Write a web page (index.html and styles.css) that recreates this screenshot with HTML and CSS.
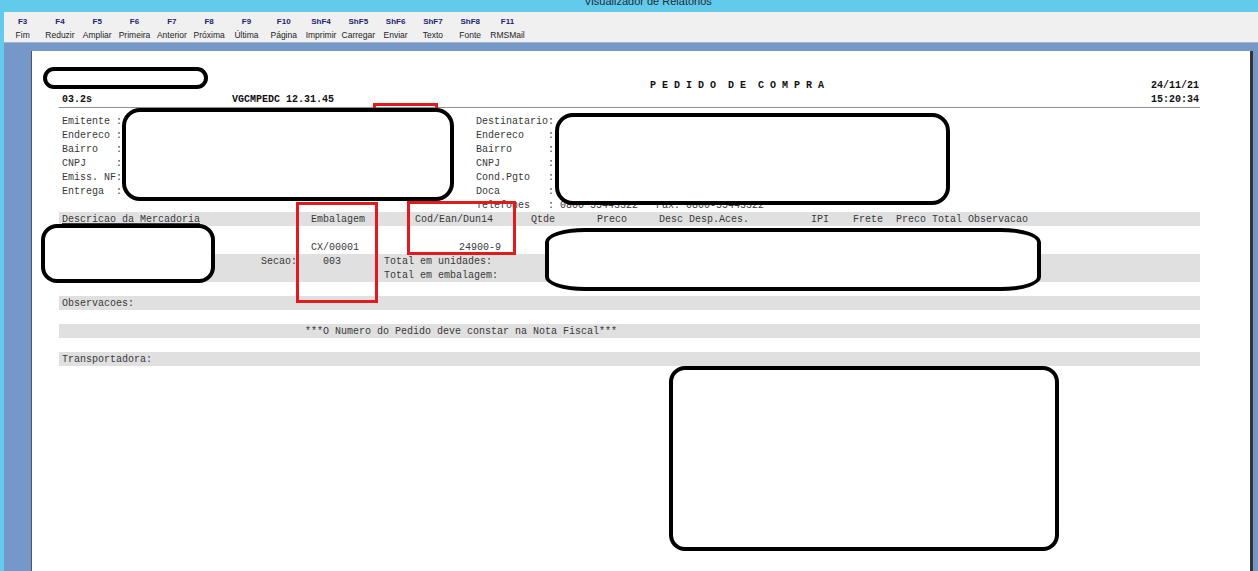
FILE: index.html
```
<!DOCTYPE html>
<html lang="pt-BR">
<head>
<meta charset="utf-8">
<title>Visualizador de Relatórios</title>
<link rel="stylesheet" href="styles.css">
</head>
<body>
<div class="app">
  <header class="titlebar"><div class="title">Visualizador de Relatórios</div></header>
  <div class="frame">
    <nav class="toolbar">
      <div class="tool"><span class="key">F3</span><span class="desc">Fim</span></div>
      <div class="tool"><span class="key">F4</span><span class="desc">Reduzir</span></div>
      <div class="tool"><span class="key">F5</span><span class="desc">Ampliar</span></div>
      <div class="tool"><span class="key">F6</span><span class="desc">Primeira</span></div>
      <div class="tool"><span class="key">F7</span><span class="desc">Anterior</span></div>
      <div class="tool"><span class="key">F8</span><span class="desc">Próxima</span></div>
      <div class="tool"><span class="key">F9</span><span class="desc">Última</span></div>
      <div class="tool"><span class="key">F10</span><span class="desc">Página</span></div>
      <div class="tool"><span class="key">ShF4</span><span class="desc">Imprimir</span></div>
      <div class="tool"><span class="key">ShF5</span><span class="desc">Carregar</span></div>
      <div class="tool"><span class="key">ShF6</span><span class="desc">Enviar</span></div>
      <div class="tool"><span class="key">ShF7</span><span class="desc">Texto</span></div>
      <div class="tool"><span class="key">ShF8</span><span class="desc">Fonte</span></div>
      <div class="tool"><span class="key">F11</span><span class="desc">RMSMail</span></div>
    </nav>
    <main class="viewer">
      <div class="page">
        <div class="report">
          <div class="rhead">
            <div class="hrow"><span class="doc-title">P E D I D O  D E  C O M P R A</span><span class="hright">24/11/21</span></div>
            <div class="hrow"><span class="prog">03.2s</span><span>VGCMPEDC 12.31.45</span><span class="hright">15:20:34</span></div>
          </div>
          <div class="parties">
            <div class="col-left">
              <div class="line">Emitente :</div>
              <div class="line">Endereco :</div>
              <div class="line">Bairro   :</div>
              <div class="line">CNPJ     :</div>
              <div class="line">Emiss. NF:</div>
              <div class="line">Entrega  :</div>
            </div>
            <div class="col-right">
              <div class="line">Destinatario:</div>
              <div class="line">Endereco    :</div>
              <div class="line">Bairro      :</div>
              <div class="line">CNPJ        :</div>
              <div class="line">Cond.Pgto   :</div>
              <div class="line">Doca        :</div>
              <div class="line">Telefones   : 0800 55443322   Fax: 0800-55443322</div>
            </div>
          </div>
          <div class="band thead">
            <span class="c-desc underline">Descricao da Mercadoria</span>
            <span class="c-emb">Embalagem</span>
            <span class="c-cod">Cod/Ean/Dun14</span>
            <span class="c-qtd">Qtde</span>
            <span class="c-preco">Preco</span>
            <span class="c-despesa">Desc Desp.Aces.</span>
            <span class="c-ipi">IPI</span>
            <span class="c-frete">Frete</span>
            <span>Preco Total Observacao</span>
          </div>
          <div class="blank"></div>
          <div class="item">
            <span class="c-desc"></span>
            <span class="c-emb">CX/00001</span>
            <span class="c-code-val">24900-9</span>
          </div>
          <div class="band totals">
            <div class="trow"><span class="t-space"></span><span class="t-secao">Secao:</span><span class="t-val">003</span><span>Total em unidades:</span></div>
            <div class="trow"><span class="t-space"></span><span class="t-secao"></span><span class="t-val"></span><span>Total em embalagem:</span></div>
          </div>
          <div class="band sec">Observacoes:</div>
          <div class="band sec"><span class="msg">***O Numero do Pedido deve constar na Nota Fiscal***</span></div>
          <div class="band sec">Transportadora:</div>
        </div>
      </div>
    </main>
  </div>

  <div class="mark red r1"></div>
  <div class="mark red r2"></div>
  <div class="mark red r3"></div>
  <div class="mark blk b1"></div>
  <div class="mark blk b2"></div>
  <div class="mark blk b3"></div>
  <div class="mark blk b4"></div>
  <div class="mark blk b5"></div>
  <div class="mark blk b6"></div>
</div>
</body>
</html>
```
FILE: styles.css
```
* { box-sizing: border-box; }

body {
  margin: 0;
  overflow: hidden;
  background: #7698c8;
}

.app {
  position: relative;
  width: 1258px;
  height: 571px;
  overflow: hidden;
  font-family: "Liberation Sans", Arial, sans-serif;
}

/* title bar */
.titlebar {
  height: 12px;
  background: #62caeb;
  overflow: hidden;
  text-align: center;
  padding-left: 38px;
}
.title {
  margin-top: -5px;
  line-height: 12px;
  font-size: 11px;
  color: #1e2a36;
}

/* window frame */
.frame {
  height: 559px;
  background: #62caeb;
  padding-left: 4px;
  display: flex;
  flex-direction: column;
}

.toolbar {
  height: 31px;
  flex: none;
  background: #f0f0f0;
  padding-top: 3px;
  border-bottom: 1px solid #a6b3c6;
  display: flex;
}
.tool {
  width: 37.3px;
  flex: none;
  display: flex;
  flex-direction: column;
  align-items: center;
}
.key {
  font-weight: bold;
  font-size: 8px;
  line-height: 13px;
  color: #1c1f6e;
}
.desc {
  font-size: 8.5px;
  line-height: 14px;
  color: #222;
  white-space: nowrap;
}

.viewer {
  flex: 1;
  background: #7698c8;
  padding: 8px 0 0 27px;
  display: flex;
  min-height: 0;
}

.page {
  width: 1222px;
  background: #fff;
  border-left: 1px solid #4a5566;
  border-right: 3px solid #333;
  padding: 28px 0 0 27px;
}

/* report */
.report {
  width: 1141px;
  font-family: "Liberation Mono", "DejaVu Sans Mono", monospace;
  font-size: 10px;
  line-height: 14px;
  color: #383838;
}

.hrow > span,
.line,
.thead > span,
.item > span,
.trow > span,
.sec,
.msg {
  white-space: pre;
}

.rhead {
  font-weight: bold;
  color: #111;
  padding: 0 1px 0 3px;
  border-bottom: 1px solid #8f8f8f;
}
.hrow { display: flex; height: 14px; }
.hright { margin-left: auto; }
.doc-title { margin-left: 588px; }
.prog { width: 170px; }

.parties {
  display: flex;
  margin-top: 6px;
  padding-left: 3px;
}
.col-left { width: 414px; }
.line { height: 14px; padding-top: 1px; }

.band {
  background: #e0e0e0;
  height: 14px;
  padding-left: 3px;
  padding-top: 1px;
}
.thead { display: flex; }
.underline { text-decoration: underline; }

.c-desc { width: 249px; flex: none; }
.c-emb { width: 104px; flex: none; }
.c-cod { width: 116px; flex: none; }
.c-qtd { width: 66px; flex: none; }
.c-preco { width: 62px; flex: none; }
.c-despesa { width: 152px; flex: none; }
.c-ipi { width: 42px; flex: none; }
.c-frete { width: 43px; flex: none; }
.c-code-val { width: 86px; flex: none; text-align: right; }

.blank { height: 14px; }
.item {
  display: flex;
  height: 14px;
  padding-left: 3px;
  padding-top: 1px;
}

.totals { height: 28px; }
.trow { display: flex; height: 14px; }
.t-space { width: 199px; flex: none; }
.t-secao { width: 62px; flex: none; }
.t-val { width: 61px; flex: none; }

.sec { margin-top: 14px; }
.msg { padding-left: 243px; }

/* annotation overlays drawn over the screenshot */
.mark { position: absolute; }
.red { border: 3px solid #e11b1b; }
.blk { border: 4px solid #000; background: #fff; }

.r1 { left: 373px; top: 103px; width: 65px; height: 30px; }
.r2 { left: 296px; top: 202px; width: 82px; height: 101px; }
.r3 { left: 407px; top: 201px; width: 109px; height: 54px; }

.b1 { left: 43px; top: 67px; width: 165px; height: 22px; border-radius: 11px; }
.b2 { left: 122px; top: 108px; width: 332px; height: 93px; border-radius: 18px; }
.b3 { left: 555px; top: 113px; width: 395px; height: 92px; border-radius: 18px; }
.b4 { left: 41px; top: 224px; width: 174px; height: 59px; border-radius: 16px; }
.b5 { left: 545px; top: 228px; width: 496px; height: 63px; border-radius: 40px / 14px; }
.b6 { left: 669px; top: 366px; width: 390px; height: 185px; border-radius: 16px; }
```
